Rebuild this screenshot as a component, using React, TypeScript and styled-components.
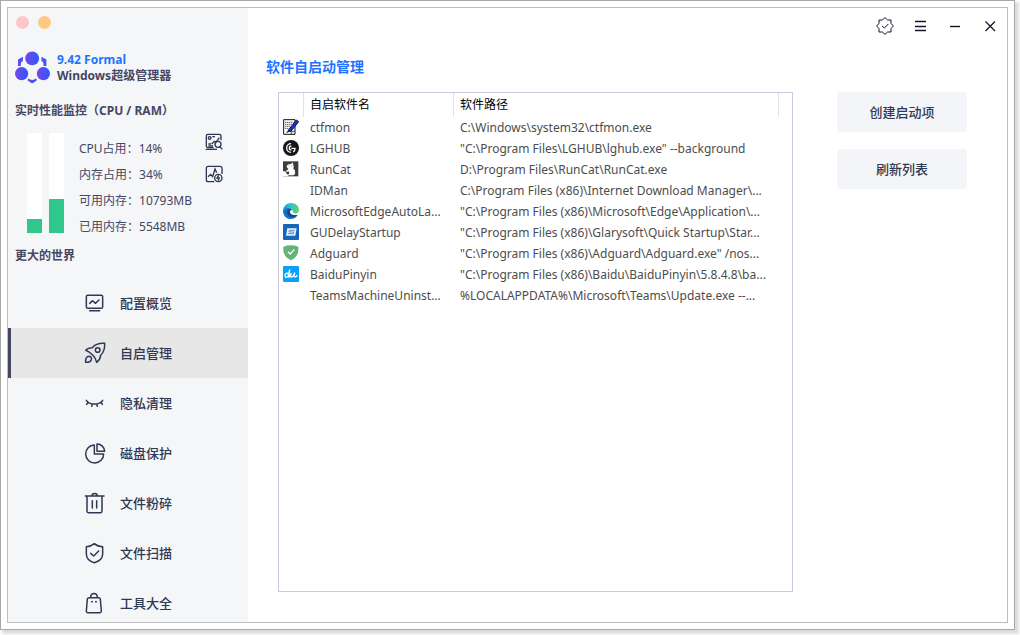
import React from "react";
import styled, { createGlobalStyle } from "styled-components";

const GlobalStyle = createGlobalStyle`
  * { box-sizing: border-box; }
  body { margin: 0; background: #fff; }
  button { font: inherit; color: inherit; border: 0; padding: 0; background: none; cursor: pointer; }
`;

const ink = "#2f3854";

const Page = styled.div`
  height: 100vh;
  display: flex;
  padding: 0 5px 5px 0;
  font-family: "Noto Sans", "Noto Sans CJK SC", sans-serif;
  font-size: 12px;
  line-height: 16px;
  color: #454763;
`;

const Frame = styled.div`
  flex: 1;
  min-width: 0;
  display: flex;
  padding: 6px;
  background: #fff;
  border: 1px solid #a8a8a8;
  box-shadow: 3px 3px 3px 1px #dcdcdc;
`;

const Shell = styled.div`
  flex: 1;
  min-width: 0;
  display: flex;
  overflow: hidden;
  border: 1px solid #bebebe;
`;

const Sidebar = styled.aside`
  flex: none;
  width: 240px;
  background: #f4f6f8;
`;

const Dots = styled.div`
  display: flex;
  gap: 9px;
  padding: 8px 8px 0;
`;

const Dot = styled.button<{ $color: string }>`
  width: 13px;
  height: 13px;
  border-radius: 50%;
  background: ${(p) => p.$color};
`;

const Brand = styled.header`
  display: flex;
  align-items: center;
  gap: 7px;
  padding: 21px 7px 0;
`;

const BrandText = styled.div`
  display: flex;
  flex-direction: column;
  padding-top: 2px;
  font-weight: 700;
`;

const Version = styled.span`
  color: #1f74ff;
`;

const SideHeading = styled.h2`
  margin: 0;
  padding: 0 7px;
  font-size: 12px;
  line-height: 16px;
  font-weight: 700;
`;

const Monitor = styled.section`
  padding-top: 19px;
`;

const MonitorBody = styled.div`
  display: flex;
  align-items: flex-start;
  padding: 14px 25px 8px 19px;
`;

const Meter = styled.div`
  width: 15px;
  height: 100px;
  margin-right: 7px;
  display: flex;
  align-items: flex-end;
  background: #fff;
`;

const MeterFill = styled.div`
  width: 100%;
  background: #30c78d;
`;

const Stats = styled.dl`
  flex: 1;
  margin: 3px 0 0 8px;
  line-height: 26px;
`;

const Stat = styled.div`
  display: flex;
  white-space: nowrap;
`;

const StatValue = styled.dd`
  margin: 0;
`;

const Tools = styled.div`
  display: flex;
  flex-direction: column;
  gap: 14px;
`;

const ToolButton = styled.button`
  display: flex;
  width: 18px;
  height: 18px;
`;

const Nav = styled.nav`
  padding-top: 14px;
`;

const NavItem = styled.a<{ $active?: boolean }>`
  display: flex;
  align-items: center;
  gap: 14px;
  height: 50px;
  padding-left: 73px;
  border-left: 3px solid ${(p) => (p.$active ? "#43475f" : "transparent")};
  background: ${(p) => (p.$active ? "#e7e7e7" : "transparent")};
  color: ${ink};
  font-size: 13px;
  font-weight: 500;
  text-decoration: none;
`;

const NavIcon = styled.svg`
  width: 22px;
  height: 22px;
  fill: none;
  stroke: ${ink};
  stroke-width: 4.5;
  stroke-linecap: round;
  stroke-linejoin: round;
`;

const Main = styled.main`
  flex: 1;
  min-width: 0;
  display: flex;
  flex-direction: column;
`;

const WindowBar = styled.div`
  display: flex;
  justify-content: flex-end;
`;

const WindowButton = styled.button`
  display: flex;
  align-items: center;
  justify-content: center;
  width: 35px;
  height: 35px;
`;

const BarIcon = styled.svg`
  width: 18px;
  height: 18px;
  fill: none;
  stroke: #14172b;
`;

const Title = styled.h1`
  margin: 0;
  padding: 14px 18px 15px;
  font-size: 14px;
  line-height: 20px;
  font-weight: 700;
  color: #1f74ff;
`;

const Content = styled.div`
  flex: 1;
  min-height: 0;
  display: flex;
  gap: 44px;
  padding: 0 40px 30px 30px;
`;

const ListBox = styled.div`
  flex: 1;
  min-width: 0;
  overflow: hidden;
  border: 1px solid #c9ccdb;
`;

const Table = styled.table`
  width: 100%;
  table-layout: fixed;
  border-collapse: separate;
  border-spacing: 0;
`;

const Col = styled.col<{ $width?: number }>`
  width: ${(p) => (p.$width ? p.$width + "px" : "auto")};
`;

const HeadCell = styled.th`
  height: 24px;
  padding: 0 6px;
  border-right: 1px solid #e2e3e8;
  text-align: left;
  font-weight: 400;
  color: #000;

  &:last-child { border-right: 0; }
`;

const Cell = styled.td`
  height: 21px;
  padding: 0 0 0 6px;
  line-height: 20px;
  white-space: nowrap;
  color: #4d4d4d;
`;

const IconCell = styled.td`
  padding: 2px 0 0 4px;
  vertical-align: top;
`;

const AppIcon = styled.svg`
  display: block;
  width: 16px;
  height: 16px;
`;

const Actions = styled.div`
  flex: none;
  width: 130px;
  display: flex;
  flex-direction: column;
  gap: 17px;
`;

const ActionButton = styled.button`
  height: 40px;
  border-radius: 4px;
  background: #f4f5f8;
  color: ${ink};
  font-size: 13px;
  font-weight: 500;
`;

const Logo = () => (
  <svg width="35" height="33" viewBox="45 150 106 99" aria-hidden="true">
    <defs>
      <linearGradient id="logo" x1="0" x2="1" y1="0" y2="0">
        <stop offset="0" stopColor="#7448e6" />
        <stop offset="1" stopColor="#2f56ff" />
      </linearGradient>
    </defs>
    <g fill="url(#logo)">
      <circle cx="97" cy="172" r="21" />
      <circle cx="65" cy="218" r="20" />
      <circle cx="131" cy="218" r="20" />
      <path d="M54 175 69 167V180L63 184V194L54 196Z" />
      <path d="M125 167 140 175V196L131 194V184L125 180Z" />
      <path d="M84 232Q97 243 110 232V240L97 248 84 240Z" />
    </g>
  </svg>
);

const navItems = [
  { label: "配置概览", icon: <><rect x="7" y="10" width="49" height="39" rx="4" /><path d="M17 56H47M17 34 26 26 34 34 45 24" /></> },
  { label: "自启管理", icon: <><path d="M5 25C10 19 18 17 25 17C34 6 46 3 62 4C63 20 59 31 50 40C49 48 46 55 38 61C36 52 33 46 28 41C22 35 14 28 5 25Z" /><circle cx="41" cy="24" r="7" /><path d="M5 61C4 50 8 43 15 43C21 44 24 48 22 53C20 59 12 61 5 61Z" /></> },
  { label: "隐私清理", icon: <path d="M7 25C16 40 47 40 56 25M13 31 8 37M25 36 23 43M38 36 40 43M50 31 55 37" /> },
  { label: "磁盘保护", icon: <path d="M31 9A27 27 0 1 0 59 36H31ZM39 6V28H62A23 23 0 0 0 39 6Z" /> },
  { label: "文件粉碎", icon: <path d="M4 12H60M24 11C24 2 40 2 40 11M9 12V58A4 4 0 0 0 13 62H50A4 4 0 0 0 54 58V12M25 26V48M38 26V48" /> },
  { label: "文件扫描", icon: <path d="M31 5C37 10 46 14 56 14V36C56 50 45 58 31 62C17 58 7 50 7 36V14C17 14 25 10 31 5ZM20 34 29 42 44 27" /> },
  { label: "工具大全", icon: <path d="M15 17H44Q48 17 49 21L52 57Q52 62 48 62H11Q7 62 7 57L10 21Q11 17 15 17ZM20 16C20 1 40 1 40 16M23 29H25M35 29H37" /> },
];

const Ctfmon = () => (
  <AppIcon viewBox="0 0 48 48">
    <path d="M2 2H36V46H2Z" fill="#fff" stroke="#111" strokeWidth="3" />
    <path d="M7 10H32M7 16H30M7 22H25M7 28H20" stroke="#111" strokeWidth="3" strokeDasharray="3 3" />
    <path d="M16 34 40 3 47 8 23 38Z" fill="#1a35d8" stroke="#0a1050" strokeWidth="3" />
    <path d="M9 43 16 33 22 37Z" fill="#111" />
    <path d="M25 46V37H36" fill="#ddd" stroke="#111" strokeWidth="2" />
  </AppIcon>
);

const Lghub = () => (
  <AppIcon viewBox="0 0 48 48">
    <circle cx="24" cy="24" r="24" fill="#15171a" />
    <path d="M24 11A13 13 0 1 0 24 37M25 18A6 6 0 1 0 25 30M25 25H36Q36 32 31 36" fill="none" stroke="#fff" strokeWidth="4" />
  </AppIcon>
);

const RunCat = () => (
  <AppIcon viewBox="0 0 48 48">
    <path d="M0 1H46V46H0Z" fill="#3c3c3c" />
    <path d="M12 13 17 10 24 9 29 4 31 12Q33 16 31 23 38 26 36 39L32 43H14L19 37 17 31 11 33 9 30 17 24Q9 20 12 13Z" fill="#fff" />
    <path d="M0 31H7L11 38 16 42V46H0Z" fill="#fff" />
    <path d="M17 15H19M25 15H27" stroke="#3c3c3c" strokeWidth="2" />
  </AppIcon>
);

const Edge = () => (
  <AppIcon viewBox="0 0 48 48">
    <defs>
      <linearGradient id="edge" x1="0" x2="1">
        <stop offset="0" stopColor="#209bdc" />
        <stop offset=".5" stopColor="#2bc3d2" />
        <stop offset="1" stopColor="#6bd64c" />
      </linearGradient>
    </defs>
    <path d="M0 23C1 9 12 0 24 0C38 0 48 9 48 21C48 29 42 33 35 33C29 33 27 30 29 27C31 22 27 15 18 15C9 15 2 19 0 23Z" fill="url(#edge)" />
    <path d="M0 23C3 16 11 13 19 16C14 20 13 28 18 34C24 41 36 41 44 36C39 44 32 48 24 48C10 48 0 37 0 23Z" fill="#1273c8" />
    <path d="M19 16C25 16 29 21 28 26C22 27 24 36 44 36C38 43 28 45 20 41C9 36 10 20 19 16Z" fill="#0e4a9b" />
    <path d="M28 24C31 29 33 33 46 32 38 39 21 36 21 27 21 22 25 18 28 24Z" fill="#fff" />
  </AppIcon>
);

const Glary = () => (
  <AppIcon viewBox="0 0 48 48">
    <rect width="48" height="48" rx="3" fill="#1767b8" />
    <path d="M13 13H41L37 35H9Z" fill="#e8f2ff" />
    <path d="M36 19H19L18 24H32L31 29H15" fill="none" stroke="#1767b8" strokeWidth="2" />
  </AppIcon>
);

const Adguard = () => (
  <AppIcon viewBox="0 0 48 48">
    <path d="M1 5Q24-3 46 5V16Q46 34 24 46Q1 34 1 16Z" fill="#67b279" />
    <path d="M15 20 22 27 34 13" fill="none" stroke="#fff" strokeWidth="4" />
  </AppIcon>
);

const Baidu = () => (
  <AppIcon viewBox="0 0 48 48">
    <rect width="48" height="48" rx="3" fill="#0aa0f7" />
    <path d="M17 23Q6 19 6 29Q7 38 15 31L20 12 17 33Q21 33 24 22L23 31Q25 37 32 28L35 21 33 31Q36 35 42 29" fill="none" stroke="#fff" strokeWidth="4" strokeLinecap="round" strokeLinejoin="round" />
  </AppIcon>
);

const programs: { name: string; path: string; icon?: React.ReactNode }[] = [
  { name: "ctfmon", path: "C:\\Windows\\system32\\ctfmon.exe", icon: <Ctfmon /> },
  { name: "LGHUB", path: '"C:\\Program Files\\LGHUB\\lghub.exe" --background', icon: <Lghub /> },
  { name: "RunCat", path: "D:\\Program Files\\RunCat\\RunCat.exe", icon: <RunCat /> },
  { name: "IDMan", path: "C:\\Program Files (x86)\\Internet Download Manager\\..." },
  { name: "MicrosoftEdgeAutoLa...", path: '"C:\\Program Files (x86)\\Microsoft\\Edge\\Application\\...', icon: <Edge /> },
  { name: "GUDelayStartup", path: '"C:\\Program Files (x86)\\Glarysoft\\Quick Startup\\Star...', icon: <Glary /> },
  { name: "Adguard", path: '"C:\\Program Files (x86)\\Adguard\\Adguard.exe" /nos...', icon: <Adguard /> },
  { name: "BaiduPinyin", path: '"C:\\Program Files (x86)\\Baidu\\BaiduPinyin\\5.8.4.8\\ba...', icon: <Baidu /> },
  { name: "TeamsMachineUninst...", path: "%LOCALAPPDATA%\\Microsoft\\Teams\\Update.exe --..." },
];

const stats = [
  ["CPU占用：", "14%"],
  ["内存占用：", "34%"],
  ["可用内存：", "10793MB"],
  ["已用内存：", "5548MB"],
];

const meters = [
  { label: "CPU", value: 14 },
  { label: "RAM", value: 34 },
];

// Eight-pointed outline of the activation badge.
const badgePoints = Array.from({ length: 16 }, (_, i) => {
  const r = i % 2 ? 20 : 25;
  const a = (i * Math.PI) / 8;
  return `${Math.round(27 + r * Math.sin(a))},${Math.round(27 - r * Math.cos(a))}`;
}).join(" ");

export default function App() {
  return (
    <Page>
      <GlobalStyle />
      <Frame>
        <Shell>
          <Sidebar>
            <Dots>
              <Dot $color="#ffc5c8" aria-label="关闭" />
              <Dot $color="#fec886" aria-label="最小化" />
            </Dots>
            <Brand>
              <Logo />
              <BrandText>
                <Version>9.42 Formal</Version>
                <span>Windows超级管理器</span>
              </BrandText>
            </Brand>
            <Monitor>
              <SideHeading>实时性能监控（CPU / RAM）</SideHeading>
              <MonitorBody>
                {meters.map((m) => (
                  <Meter key={m.label} role="meter" aria-label={m.label} aria-valuenow={m.value} aria-valuemin={0} aria-valuemax={100}>
                    <MeterFill style={{ height: `${m.value}%` }} />
                  </Meter>
                ))}
                <Stats>
                  {stats.map(([label, value]) => (
                    <Stat key={label}>
                      <dt>{label}</dt>
                      <StatValue>{value}</StatValue>
                    </Stat>
                  ))}
                </Stats>
                <Tools>
                  <ToolButton aria-label="系统检测">
                    <svg width="18" height="18" viewBox="0 0 54 54" fill="none" stroke={ink} strokeWidth="4">
                      <path d="M48 22V9Q48 4 43 4H9Q4 4 4 9V39Q4 44 9 44H26M2 49H36M20 33 28 25 33 28 43 14M10 33H18M10 39H24" />
                      <circle cx="14" cy="15" r="4" />
                      <path d="M22 11H30" />
                      <circle cx="39" cy="34" r="9" />
                      <path d="M45 41 52 49" />
                    </svg>
                  </ToolButton>
                  <ToolButton aria-label="性能加速">
                    <svg width="18" height="18" viewBox="0 0 54 54" fill="none" stroke={ink} strokeWidth="4">
                      <path d="M51 27V10Q51 4 45 4H10Q4 4 4 10V44Q4 50 10 50H28M9 35 17 28 23 35 30 12 35 23" />
                      <circle cx="40" cy="39" r="11" />
                      <path d="M41 31 36 39H43L39 47" />
                    </svg>
                  </ToolButton>
                </Tools>
              </MonitorBody>
              <SideHeading>更大的世界</SideHeading>
            </Monitor>
            <Nav>
              {navItems.map((item) => (
                <NavItem key={item.label} href="#" $active={item.label === "自启管理"}>
                  <NavIcon viewBox="0 0 66 66" aria-hidden="true">{item.icon}</NavIcon>
                  {item.label}
                </NavItem>
              ))}
            </Nav>
          </Sidebar>
          <Main>
            <WindowBar>
              <WindowButton aria-label="激活">
                <BarIcon viewBox="0 0 54 54" strokeWidth="3">
                  <polygon points={badgePoints} />
                  <path d="M18 27 25 33 37 21" />
                </BarIcon>
              </WindowButton>
              <WindowButton aria-label="菜单">
                <BarIcon viewBox="0 0 18 18" strokeWidth="1.3">
                  <path d="M4 4.5H15M4 9.5H15M4 13.5H15" />
                </BarIcon>
              </WindowButton>
              <WindowButton aria-label="最小化">
                <BarIcon viewBox="0 0 18 18" strokeWidth="1.4">
                  <path d="M4 9.5H14" />
                </BarIcon>
              </WindowButton>
              <WindowButton aria-label="关闭">
                <BarIcon viewBox="0 0 18 18" strokeWidth="1.3">
                  <path d="M4.500 4.500 14 14M14 4.500 4.500 14" />
                </BarIcon>
              </WindowButton>
            </WindowBar>
            <Title>软件自启动管理</Title>
            <Content>
              <ListBox>
                <Table>
                  <colgroup>
                    <Col $width={25} />
                    <Col $width={150} />
                    <Col />
                    <Col $width={13} />
                  </colgroup>
                  <thead>
                    <tr>
                      <HeadCell aria-label="图标" />
                      <HeadCell>自启软件名</HeadCell>
                      <HeadCell>软件路径</HeadCell>
                      <HeadCell aria-hidden="true" />
                    </tr>
                  </thead>
                  <tbody>
                    {programs.map((p) => (
                      <tr key={p.name}>
                        <IconCell>{p.icon}</IconCell>
                        <Cell>{p.name}</Cell>
                        <Cell colSpan={2}>{p.path}</Cell>
                      </tr>
                    ))}
                  </tbody>
                </Table>
              </ListBox>
              <Actions>
                <ActionButton>创建启动项</ActionButton>
                <ActionButton>刷新列表</ActionButton>
              </Actions>
            </Content>
          </Main>
        </Shell>
      </Frame>
    </Page>
  );
}
